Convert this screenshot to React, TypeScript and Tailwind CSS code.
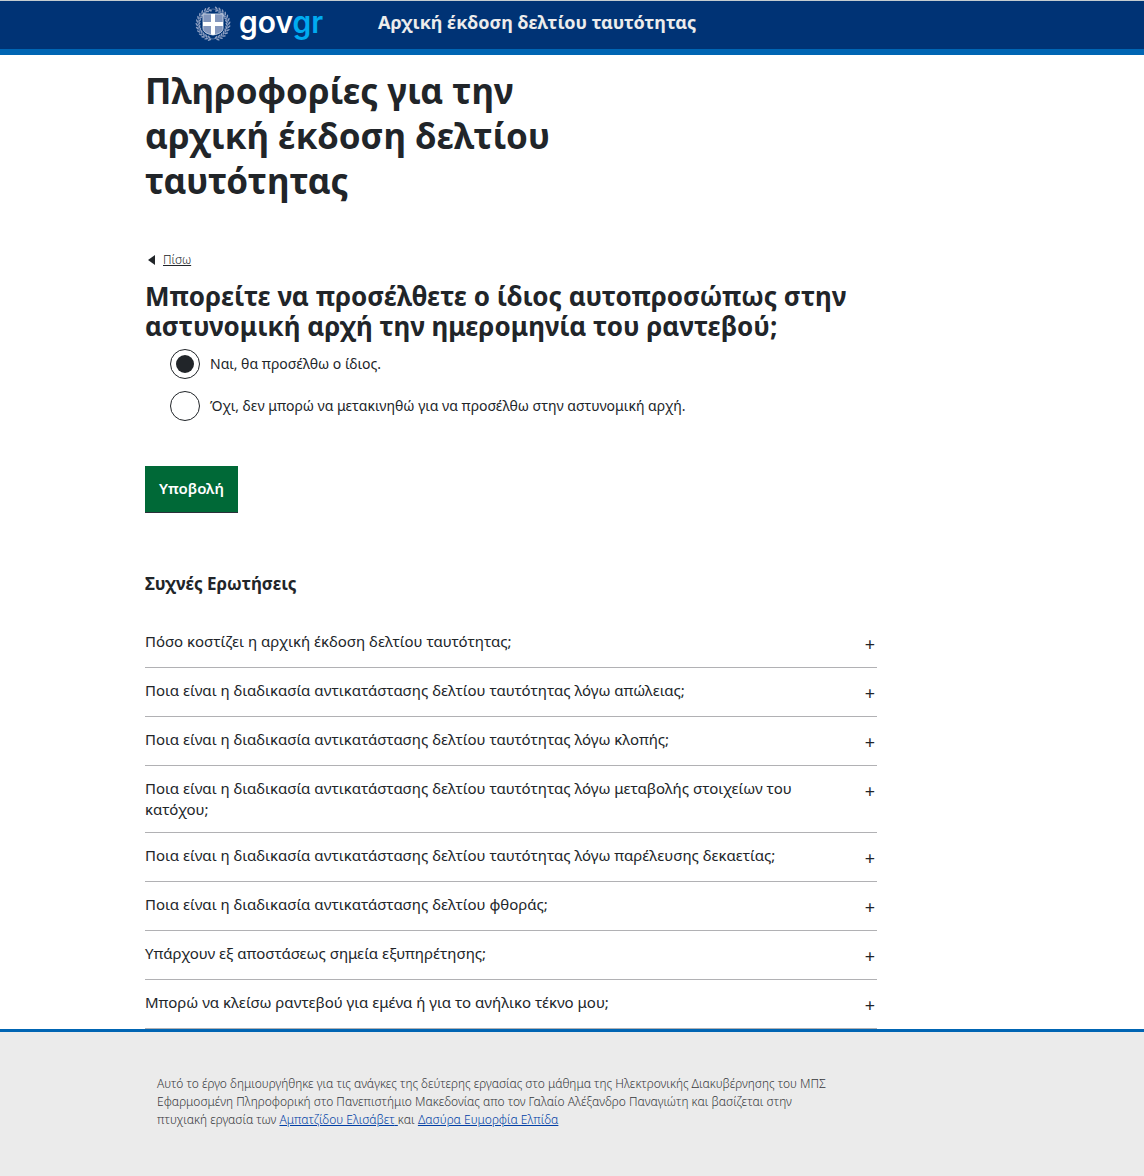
import { useState } from "react";

const questions = [
  "Πόσο κοστίζει η αρχική έκδοση δελτίου ταυτότητας;",
  "Ποια είναι η διαδικασία αντικατάστασης δελτίου ταυτότητας λόγω απώλειας;",
  "Ποια είναι η διαδικασία αντικατάστασης δελτίου ταυτότητας λόγω κλοπής;",
  "Ποια είναι η διαδικασία αντικατάστασης δελτίου ταυτότητας λόγω μεταβολής στοιχείων του κατόχου;",
  "Ποια είναι η διαδικασία αντικατάστασης δελτίου ταυτότητας λόγω παρέλευσης δεκαετίας;",
  "Ποια είναι η διαδικασία αντικατάστασης δελτίου φθοράς;",
  "Υπάρχουν εξ αποστάσεως σημεία εξυπηρέτησης;",
  "Μπορώ να κλείσω ραντεβού για εμένα ή για το ανήλικο τέκνο μου;",
];

const options = [
  { id: "yes", label: "Ναι, θα προσέλθω ο ίδιος." },
  { id: "no", label: "Όχι, δεν μπορώ να μετακινηθώ για να προσέλθω στην αστυνομική αρχή." },
];

const leafAngles = Array.from({ length: 13 }, (_, i) => 14 + i * 12.6);

function Emblem() {
  return (
    <svg viewBox="0 0 36 36" className="h-9 w-9 shrink-0" aria-hidden="true">
      <g fill="#8d9fc2">
        {[...leafAngles, ...leafAngles.map((a) => -a)].map((a) => (
          <g key={a} transform={`rotate(${a} 18 18)`}>
            <ellipse cx="17.300" cy="1.800" rx="1.900" ry="0.800" transform={`rotate(${a > 0 ? 35 : -35} 17.300 1.800)`} />
            <ellipse cx="18.500" cy="4.300" rx="1.900" ry="0.800" transform={`rotate(${a > 0 ? -30 : 30} 18.500 4.300)`} />
          </g>
        ))}
      </g>
      <circle cx="18" cy="18" r="15" fill="none" stroke="#7f94bb" strokeWidth="0.6" />
      <path
        d="M8 8h20v14c0 4-4 6-10 7-6-1-10-3-10-7z"
        fill="#8296bd"
        stroke="#c3cee0"
        strokeWidth="1"
      />
      <path d="M16 8h4v8h8v4h-8v8.500l-2 .5-2-.5v-8.500H8v-4h8z" fill="#fff" />
    </svg>
  );
}

function Logo() {
  return (
    <a href="#" className="flex items-start gap-2" aria-label="govgr">
      <Emblem />
      <span className="font-['Inter',sans-serif] text-[30px] leading-8 font-semibold text-white">
        gov<span className="text-[#00abf0]">gr</span>
      </span>
    </a>
  );
}

export default function App() {
  const [answer, setAnswer] = useState("yes");
  return (
    <div className="bg-white font-['Noto_Sans',sans-serif] text-[#212529]">
      <header className="flex h-[55px] items-start border-t border-b-6 border-t-[#c4ccd0] border-b-[#0065b3] bg-[#003375] pt-[5px] pl-[195px]">
        <div className="flex h-9 w-[183px] items-start">
          <Logo />
        </div>
        <p className="text-lg leading-8 font-bold text-[#ececec]">Αρχική έκδοση δελτίου ταυτότητας</p>
      </header>

      <main className="mx-[145px]">
        <div className="max-w-[732px]">
          <h1 className="max-w-[427px] pt-[13px] text-[35px] leading-[45px] font-bold">
            Πληροφορίες για την αρχική έκδοση δελτίου ταυτότητας
          </h1>
          <a href="#" className="mt-12 flex items-center gap-2 pl-[3px] text-xs leading-[18px] font-light">
            <svg viewBox="0 0 7 10" className="h-[10px] w-[7px]" aria-hidden="true">
              <path d="M0 5 7 0v10z" fill="#212529" />
            </svg>
            <span className="underline">Πίσω</span>
          </a>
          <form onSubmit={(e) => e.preventDefault()}>
            <fieldset>
              <legend className="pt-3">
                <h2 className="text-[26px] leading-[30px] font-bold">
                  Μπορείτε να προσέλθετε ο ίδιος αυτοπροσώπως στην αστυνομική αρχή την ημερομηνία του ραντεβού;
                </h2>
              </legend>
              <div className="flex flex-col gap-3 pt-2 pl-[25px]">
                {options.map((o) => (
                  <label key={o.id} htmlFor={o.id} className="flex items-center gap-2.5 text-sm font-normal">
                    <input
                      id={o.id}
                      type="radio"
                      name="attend"
                      checked={answer === o.id}
                      onChange={() => setAnswer(o.id)}
                      className="grid h-[30px] w-[30px] shrink-0 appearance-none place-items-center rounded-full border border-[#212529] bg-white before:h-[18px] before:w-[18px] before:rounded-full checked:before:bg-[#212529]"
                    />
                    {o.label}
                  </label>
                ))}
              </div>
            </fieldset>
            <button
              type="submit"
              className="mt-[45px] h-[46px] bg-[#006937] px-[14px] pb-0.5 text-[15px] font-semibold text-white shadow-[0_1px_0_#2b2f3a]"
            >
              Υποβολή
            </button>
          </form>

          <section className="mt-[59px]">
            <h3 className="text-[17px] leading-[26px] font-bold">Συχνές Ερωτήσεις</h3>
            <div className="mt-[22px]">
              {questions.map((q) => (
                <button
                  key={q}
                  type="button"
                  className="flex w-full items-start justify-between border-b border-[#b1b1b4] py-3 text-left text-[15px] leading-[21px]"
                >
                  <span className="max-w-[670px]">{q}</span>
                  <span className="pt-[3px] pr-0.5 text-lg leading-[21px]">+</span>
                </button>
              ))}
            </div>
          </section>
        </div>
      </main>

      <footer className="border-t-3 border-[#0065b3] bg-[#ebebeb] px-[157px] pt-[43px] pb-[47px]">
        <p className="max-w-[684px] text-xs leading-[18px] font-light text-[#36383b]">
          Αυτό το έργο δημιουργήθηκε για τις ανάγκες της δεύτερης εργασίας στο μάθημα της Ηλεκτρονικής Διακυβέρνησης του
          ΜΠΣ Εφαρμοσμένη Πληροφορική στο Πανεπιστήμιο Μακεδονίας απο τον Γαλαίο Αλέξανδρο Παναγιώτη και βασίζεται στην
          πτυχιακή εργασία των{" "}
          <a href="#" className="text-[#003ea5] underline">
            Αμπατζίδου Ελισάβετ{" "}
          </a>
          και{" "}
          <a href="#" className="text-[#003ea5] underline">
            Δασύρα Ευμορφία Ελπίδα
          </a>
        </p>
      </footer>
    </div>
  );
}
